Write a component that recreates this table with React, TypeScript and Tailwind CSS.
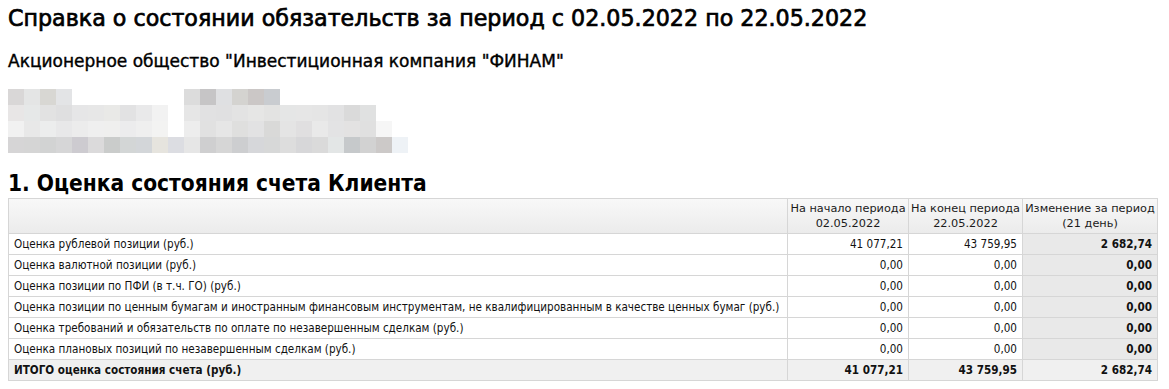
const rows = [
  { label: "Оценка рублевой позиции (руб.)", start: "41 077,21", end: "43 759,95", diff: "2 682,74" },
  { label: "Оценка валютной позиции (руб.)", start: "0,00", end: "0,00", diff: "0,00" },
  { label: "Оценка позиции по ПФИ (в т.ч. ГО) (руб.)", start: "0,00", end: "0,00", diff: "0,00" },
  {
    label:
      "Оценка позиции по ценным бумагам и иностранным финансовым инструментам, не квалифицированным в качестве ценных бумаг (руб.)",
    start: "0,00",
    end: "0,00",
    diff: "0,00",
  },
  { label: "Оценка требований и обязательств по оплате по незавершенным сделкам (руб.)", start: "0,00", end: "0,00", diff: "0,00" },
  { label: "Оценка плановых позиций по незавершенным сделкам (руб.)", start: "0,00", end: "0,00", diff: "0,00" },
];

// pixelated (censored) block: rows of 16px tiles, null = empty
const mosaic: (string | null)[][] = [
  ["#d9d7d7", "#e4e5e5", "#d8d7d3", "#e3e4e6", null, null, null, null, null, null, null, "#dcdcdc", "#c6c5c6", "#dfe0e2", "#d4d3d0", "#cbc7c6", "#c9ccd0"],
  ["#e8e6e6", "#e6e8e8", "#e2e2e2", "#dfdfe0", "#e6e6e7", "#e7e7e7", "#e9e9e7", "#e2e2e3", "#e9e9ea", "#f2f2f2", null, "#e6e6e6", "#e1e1e2", "#e0e0e1", "#e3e3e3", "#e6e6e5", "#e3e3e2", "#e5e6e6", "#e6e6e6", "#e5e5e5", "#e2e2e3", "#dadada", "#e0e1e1"],
  ["#f1f1f1", "#e8e8e8", "#eceded", "#e8e8e9", "#ececec", "#efefef", "#efefee", "#ececed", "#efefef", "#f3f3f2", null, "#ededed", "#e1e1e1", "#e6e6e6", "#dfdfde", "#e2e2e3", "#d9d9d8", "#e4e4e4", "#e0dfe0", "#e9e9e9", "#e3e3e4", "#e3e2e2", "#e0e0e0", "#f6f6f6"],
  ["#d6d5d6", "#d5d5d5", "#d2d3d3", "#d6d6d7", "#cdcbd0", "#dbdadb", "#cacccb", "#d3d6d6", "#d3d6d9", "#e6e4de", "#dcdde2", "#e6e6e6", "#cfcfd0", "#d6d6d6", "#cdced0", "#d6d7da", "#d7d8d8", "#dddddd", "#d7d7d9", "#dadada", "#e3e6e6", "#c6c9cb", "#d2d2d2", "#ccc9c8", "#eef2f6"],
];

const cell = "border border-[#d6d6d6] px-[5px]";
const head = "border border-[#d6d6d6] px-[2px] font-normal text-center whitespace-nowrap";

export default function App() {
  return (
    <div className="bg-white text-black px-2 pt-[4px]">
      <h1 className="font-['DejaVu_Sans',sans-serif] text-[22.2px] leading-[28px] font-normal [-webkit-text-stroke:0.7px_black]">
        Справка о состоянии обязательств за период с 02.05.2022 по 22.05.2022
      </h1>
      <h2 className="mt-[19px] font-['DejaVu_Sans',sans-serif] text-[17px] leading-[20px] font-normal [-webkit-text-stroke:0.4px_black]">
        Акционерное общество "Инвестиционная компания "ФИНАМ"
      </h2>

      <div className="mt-[18px] flex flex-col">
        {mosaic.map((line, i) => (
          <div key={i} className="flex">
            {line.map((c, j) => (
              <div
                key={j}
                className="w-4 h-4"
                style={{ backgroundColor: c ?? "transparent" }}
              />
            ))}
          </div>
        ))}
      </div>

      <h3 className="mt-[16px] font-['DejaVu_Sans_Condensed','DejaVu_Sans',sans-serif] text-[22.5px] leading-[28px] font-bold">
        1. Оценка состояния счета Клиента
      </h3>

      <table className="mt-px w-[1150px] border-collapse font-['DejaVu_Sans_Condensed','DejaVu_Sans',sans-serif] text-[11.6px] leading-[14px] text-[#111]">
        <thead className="font-['DejaVu_Sans',sans-serif] text-[11.3px] leading-[15px] text-[#1a1a1a]">
          <tr className="h-[35px] bg-gradient-to-b from-[#f8f8f8] to-[#ebebeb]">
            <th className={`${head} w-[779px]`}></th>
            <th className={`${head} w-[121px]`}>
              На начало периода
              <br />
              02.05.2022
            </th>
            <th className={`${head} w-[114px]`}>
              На конец периода
              <br />
              22.05.2022
            </th>
            <th className={head}>
              Изменение за период
              <br />
              (21 день)
            </th>
          </tr>
        </thead>
        <tbody>
          {rows.map(r => (
            <tr key={r.label} className="h-[21px]">
              <td className={`${cell} whitespace-nowrap`}>{r.label}</td>
              <td className={`${cell} text-right`}>{r.start}</td>
              <td className={`${cell} text-right`}>{r.end}</td>
              <td className={`${cell} text-right font-bold bg-[#e9e9e9]`}>{r.diff}</td>
            </tr>
          ))}
          <tr className="h-[21px] bg-[#f0f0f0] font-bold">
            <td className={cell}>ИТОГО оценка состояния счета (руб.)</td>
            <td className={`${cell} text-right`}>41 077,21</td>
            <td className={`${cell} text-right`}>43 759,95</td>
            <td className={`${cell} text-right`}>2 682,74</td>
          </tr>
        </tbody>
      </table>
    </div>
  );
}
